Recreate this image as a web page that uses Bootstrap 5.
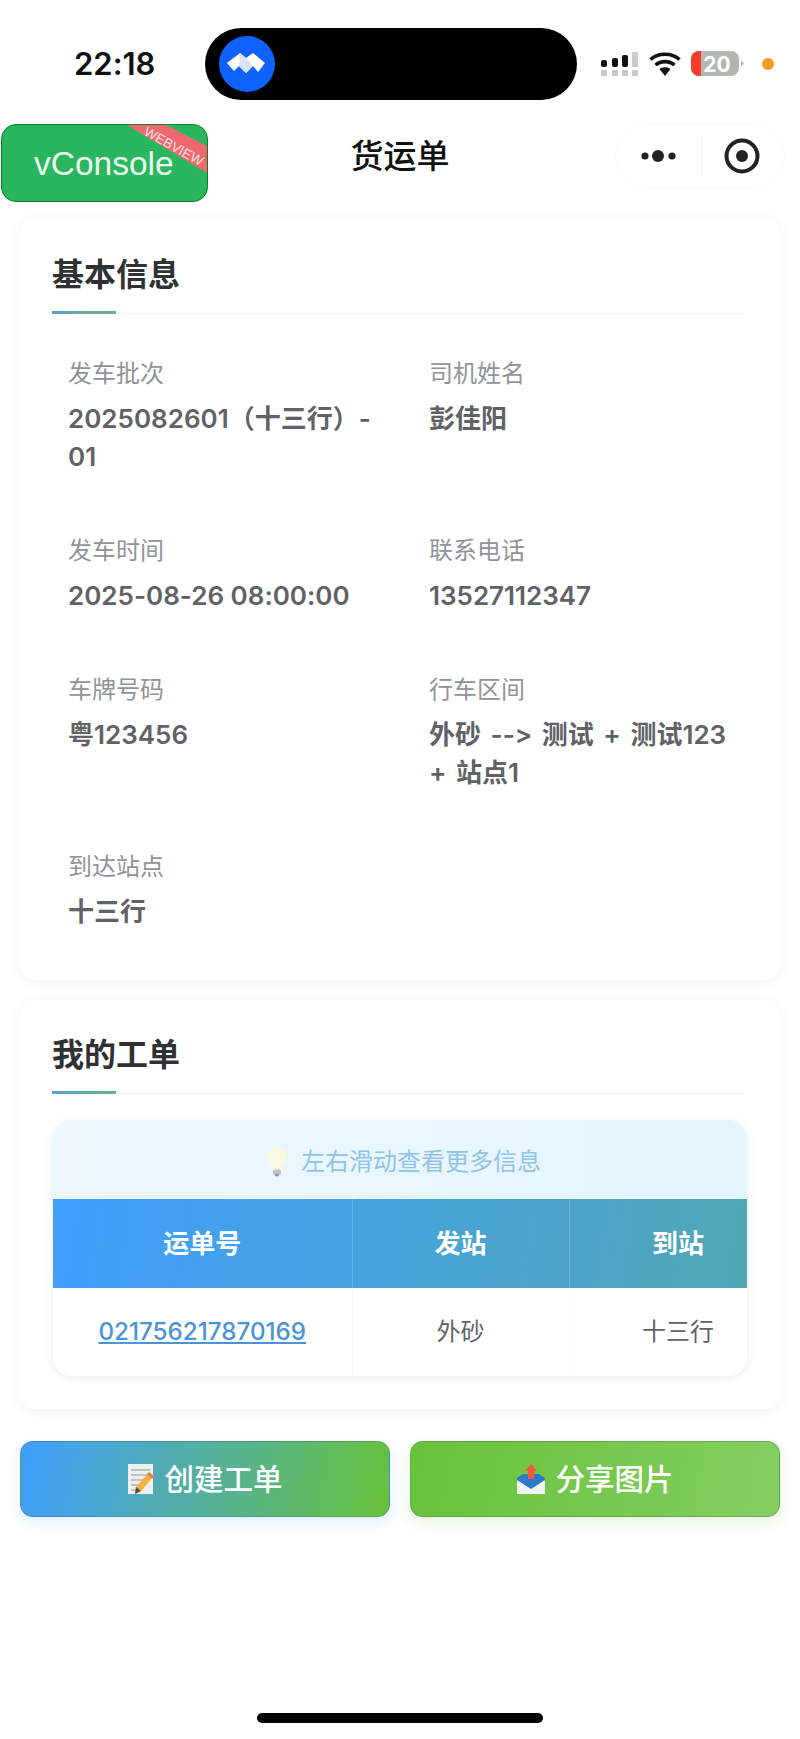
<!DOCTYPE html>
<html lang="zh-CN">
<head>
  <meta charset="UTF-8" />
  <title>货运单</title>
  <meta name="viewport" content="width=device-width, initial-scale=1" />
  <link href="https://cdn.jsdelivr.net/npm/bootstrap@5.3.3/dist/css/bootstrap.min.css" rel="stylesheet" />

  <style>
    body {
      background-color: #fff;
      font-family: Inter, "Noto Sans CJK SC", sans-serif;
      font-variant-ligatures: none;
      font-feature-settings: "calt" 0;
      position: relative;
      height: 1739px;
      overflow: hidden;
    }

    /* phone status bar */
    .status-bar {
      height: 100px;
      padding-top: 28px;
      padding-left: 74px;
    }

    .clock {
      width: 131px;
      font-size: 31px;
      font-weight: 600;
      color: #111;
    }

    .island {
      width: 372px;
      height: 72px;
      flex: none;
      background-color: #000;
      border-radius: 36px;
      padding-left: 14px;
    }

    .status-icons {
      margin-left: 24px;
    }

    /* wechat nav */
    .top-nav {
      height: 64px;
      margin-top: 24px;
      margin-bottom: 30px;
    }

    .nav-side {
      flex: 1;
    }

    .nav-title {
      font-size: 33px;
      font-weight: 500;
      color: #111;
      line-height: 1;
    }

    .capsule {
      width: 170px;
      height: 64px;
      margin-right: 15px;
      border: 1px solid #f9f9f9;
      border-radius: 32px;
    }

    .capsule-line {
      width: 1px;
      height: 40px;
      background-color: #f0f0f0;
    }

    .vconsole {
      position: absolute;
      left: 1px;
      top: 124px;
      width: 207px;
      height: 78px;
      background-color: #2ab65e;
      border: 1px solid #0c7d22;
      border-radius: 15px;
      color: #e9faef;
      font-family: "Liberation Sans", sans-serif;
      font-size: 33.5px;
      line-height: 78px;
      padding-left: 32px;
    }

    .vconsole svg {
      position: absolute;
      left: -2px;
      top: -1px;
    }

    /* cards */
    .info-card {
      margin: 0 20px;
      border-radius: 16px;
      box-shadow: 0 2px 16px rgba(0, 0, 0, 0.05);
      padding: 35px 33px 49px 32px;
    }

    .info-card + .info-card {
      margin-top: 20px;
      padding-top: 33px;
      padding-bottom: 33px;
    }

    .sect-title {
      position: relative;
      font-size: 32px;
      font-weight: 600;
      line-height: 44px;
      color: #303133;
      padding-bottom: 16px;
      margin-right: 3px;
      border-bottom: 1px solid #f3f4f6;
      margin-bottom: 43px;
    }

    .sect-title::after {
      content: "";
      position: absolute;
      left: 0;
      bottom: -1px;
      width: 64px;
      height: 3px;
      background: linear-gradient(90deg, #5c9fd0, #6cb57a);
    }

    .info-grid {
      display: grid;
      grid-template-columns: 320px 312px;
      column-gap: 41px;
      row-gap: 58px;
      padding-left: 16px;
    }

    .info-label {
      font-size: 24px;
      line-height: 34px;
      color: #909399;
      margin-bottom: 9px;
    }

    .info-value {
      font-size: 26px;
      font-weight: 600;
      line-height: 38px;
      color: #606266;
    }

    .route-text {
      word-spacing: 3px;
    }

    /* table */
    .sect-title.tight {
      margin-bottom: 26px;
      border-bottom-color: #eceef1;
    }

    .table-box {
      margin-left: 1px;
      border-radius: 18px;
      overflow: hidden;
      box-shadow: 0 2px 10px rgba(0, 0, 0, 0.08);
    }

    .tip-bar {
      height: 79px;
      padding-top: 5px;
      padding-left: 6px;
      background: linear-gradient(90deg, #eef7fe, #e3f5ff);
      color: #91c3ea;
      font-size: 24px;
      gap: 12px;
    }

    .order-table {
      width: 734px;
      max-width: none;
      table-layout: fixed;
      --bs-table-bg: transparent;
      text-align: center;
    }

    .order-table thead {
      background: linear-gradient(100deg, #409eff, #52a9a8 110%);
    }

    .order-table th {
      height: 89px;
      vertical-align: middle;
      color: #fff;
      font-size: 26px;
      font-weight: 600;
      padding: 0;
      border-bottom: 0;
      border-right: 1px solid rgba(255, 255, 255, 0.18);
    }

    .order-table td {
      height: 88px;
      vertical-align: middle;
      font-size: 24px;
      color: #606266;
      padding: 0;
      border-bottom: 0;
      border-right: 1px solid #f5f7fa;
    }

    .order-table a {
      color: #4a94d8;
      font-size: 24.2px;
      font-weight: 500;
    }

    /* bottom buttons */
    .action-row {
      margin: 32px 20px 0;
      gap: 20px;
    }

    .action-btn {
      flex: 1;
      height: 76px;
      border-radius: 13px;
      border: 1px solid rgba(60, 90, 90, 0.3);
      color: #fff;
      font-size: 29.5px;
      font-weight: 500;
      gap: 9px;
    }

    .action-btn.blue {
      background: linear-gradient(100deg, #409eff, #67c23a);
      box-shadow: 0 6px 16px rgba(64, 158, 255, 0.18);
    }

    .action-btn.green {
      background: linear-gradient(100deg, #67c23a, #85ce61);
      box-shadow: 0 6px 16px rgba(103, 194, 58, 0.18);
    }

    .home-bar {
      position: absolute;
      left: 257px;
      top: 1713px;
      width: 286px;
      height: 10px;
      border-radius: 5px;
      background-color: #000;
    }
  </style>
</head>
<body class="m-0">

  <!-- Status bar -->
  <div class="status-bar d-flex align-items-center">
    <div class="clock">22:18</div>
    <div class="island d-flex align-items-center">
      <svg width="56" height="56" viewBox="0 0 56 56">
        <circle cx="28" cy="28" r="28" fill="#0f62fe" />
        <path d="M8 27 L21 17 L27 22 L34 17 L46 27 L39 36 L34 30 L27 37 L20 30 L15 35 Z" fill="#fff" />
        <path d="M21 17 L27 22 L34 30 L27 37 L20 30 Z" fill="#d9e2f3" />
      </svg>
    </div>
    <div class="status-icons d-flex align-items-center">
      <svg width="180" height="40" viewBox="0 -4 180 40">
        <rect x="0" y="12" width="6" height="7" rx="2" fill="#111" />
        <rect x="11" y="10" width="6" height="9" rx="2" fill="#111" />
        <rect x="21" y="7" width="6" height="12" rx="2" fill="#111" />
        <rect x="31" y="4" width="6" height="15" rx="1" fill="#ccc" />
        <g fill="#c8c8c8">
          <rect x="0" y="22" width="6" height="6" rx="1" />
          <rect x="11" y="22" width="6" height="6" rx="1" />
          <rect x="21" y="22" width="6" height="6" rx="1" />
          <rect x="31" y="22" width="6" height="6" rx="1" />
        </g>
        <g fill="none" stroke="#111" stroke-width="3.6">
          <path d="M49.5 11.5 C57 4.5 71 4.5 78.5 11.5" />
          <path d="M54.5 17 C59.5 12.5 68.5 12.5 73.5 17" />
        </g>
        <path d="M58.5 21 C61.5 18.8 66.5 18.8 69.5 21 L64 28 Z" fill="#111" />
        <rect x="90" y="3" width="48" height="25" rx="8" fill="#b5b5b5" />
        <path d="M100 3 H98 a8 8 0 0 0 -8 8 V20 a8 8 0 0 0 8 8 H100 Z" fill="#f43c27" />
        <path d="M140 12 L143 15.5 L140 19 Z" fill="#b5b5b5" />
        <text x="116" y="23.5" text-anchor="middle" font-family="Inter, sans-serif" font-size="21" font-weight="700" fill="#fff">20</text>
        <circle cx="167" cy="16" r="6" fill="#f39c1f" />
      </svg>
    </div>
  </div>

  <!-- Nav -->
  <div class="top-nav d-flex align-items-center">
    <div class="nav-side"></div>
    <div class="nav-title">货运单</div>
    <div class="nav-side d-flex justify-content-end">
      <div class="capsule d-flex align-items-center justify-content-between px-4">
        <svg width="38" height="16" viewBox="0 0 38 16">
          <circle cx="5" cy="8" r="3.6" fill="#222" />
          <circle cx="18" cy="8" r="6" fill="#222" />
          <circle cx="32" cy="8" r="3.6" fill="#222" />
        </svg>
        <div class="capsule-line"></div>
        <svg width="36" height="36" viewBox="0 0 36 36">
          <circle cx="18" cy="18" r="15.5" fill="none" stroke="#222" stroke-width="4" />
          <circle cx="18" cy="18" r="6" fill="#222" />
        </svg>
      </div>
    </div>
  </div>

  <div class="vconsole">
    vConsole
    <svg width="209" height="80" viewBox="0 0 209 80">
      <polygon points="127,1 166,1 207,22 207,49" fill="#f0686f" />
      <text x="171.6" y="26.4" text-anchor="middle" font-family="Liberation Sans, sans-serif" font-size="13.5" fill="#ffe3e3" transform="rotate(29 171.6 26.4)">WEBVIEW</text>
    </svg>
  </div>

  <!-- Basic info -->
  <div class="card border-0 info-card">
    <div class="sect-title">基本信息</div>
    <div class="info-grid">
      <div>
        <div class="info-label">发车批次</div>
        <div class="info-value">2025082601（十三行）-<wbr>01</div>
      </div>
      <div>
        <div class="info-label">司机姓名</div>
        <div class="info-value">彭佳阳</div>
      </div>
      <div>
        <div class="info-label">发车时间</div>
        <div class="info-value">2025-08-26 08:00:00</div>
      </div>
      <div>
        <div class="info-label">联系电话</div>
        <div class="info-value">13527112347</div>
      </div>
      <div>
        <div class="info-label">车牌号码</div>
        <div class="info-value">粤123456</div>
      </div>
      <div>
        <div class="info-label">行车区间</div>
        <div class="info-value route-text">外砂 --&gt; 测试 + 测试123 + 站点1</div>
      </div>
      <div>
        <div class="info-label">到达站点</div>
        <div class="info-value">十三行</div>
      </div>
    </div>
  </div>

  <!-- Work orders -->
  <div class="card border-0 info-card">
    <div class="sect-title tight">我的工单</div>
    <div class="table-box">
      <div class="tip-bar d-flex align-items-center justify-content-center">
        <svg width="24" height="32" viewBox="0 0 26 32">
          <path d="M13 1 C6 1 2 6 2 11 C2 16 7 19 8 24 H18 C19 19 24 16 24 11 C24 6 20 1 13 1 Z" fill="#fbf8e2" />
          <rect x="8.5" y="24" width="9" height="6" rx="2" fill="#c3c5cb" />
          <rect x="11" y="29" width="4" height="2.5" rx="1" fill="#8d9099" />
        </svg>
        <span>左右滑动查看更多信息</span>
      </div>
      <table class="table order-table mb-0">
        <colgroup>
          <col style="width: 299px" />
          <col style="width: 217px" />
          <col style="width: 218px" />
        </colgroup>
        <thead>
          <tr>
            <th>运单号</th>
            <th>发站</th>
            <th>到站</th>
          </tr>
        </thead>
        <tbody>
          <tr>
            <td><a href="#">021756217870169</a></td>
            <td>外砂</td>
            <td>十三行</td>
          </tr>
        </tbody>
      </table>
    </div>
  </div>

  <!-- Buttons -->
  <div class="action-row d-flex">
    <button type="button" class="btn action-btn blue d-flex align-items-center justify-content-center">
      <svg width="28" height="32" viewBox="0 0 28 32">
        <rect x="1" y="1" width="25" height="30" fill="#eef0ee" />
        <g stroke="#a9b4bd" stroke-width="1.5">
          <path d="M4 7 H23" />
          <path d="M4 12 H23" />
          <path d="M4 17 H16" />
          <path d="M4 22 H11" />
          <path d="M4 27 H9" />
        </g>
        <path d="M22 9 L27 13 L14 28 L8 31 L9 24 Z" fill="#f4b33c" />
        <path d="M22 9 L27 13 L25 15.5 L20 11.5 Z" fill="#e87c6a" />
        <path d="M9 24 L14 28 L8 31 Z" fill="#5a4a3a" />
      </svg>
      <span>创建工单</span>
    </button>
    <button type="button" class="btn action-btn green d-flex align-items-center justify-content-center">
      <svg width="30" height="32" viewBox="0 0 30 32">
        <path d="M1 16 H29 V31 H1 Z" fill="#f1f3f4" />
        <path d="M1 15 L7 11 H23 L29 15 V17 L15 26 L1 17 Z" fill="#2d78c8" />
        <path d="M15 1 L21 8 H18 V16 H12 V8 H9 Z" fill="#ee5a3c" />
      </svg>
      <span>分享图片</span>
    </button>
  </div>

  <div class="home-bar"></div>

  <script src="https://cdn.jsdelivr.net/npm/bootstrap@5.3.3/dist/js/bootstrap.bundle.min.js"></script>
</body>
</html>
